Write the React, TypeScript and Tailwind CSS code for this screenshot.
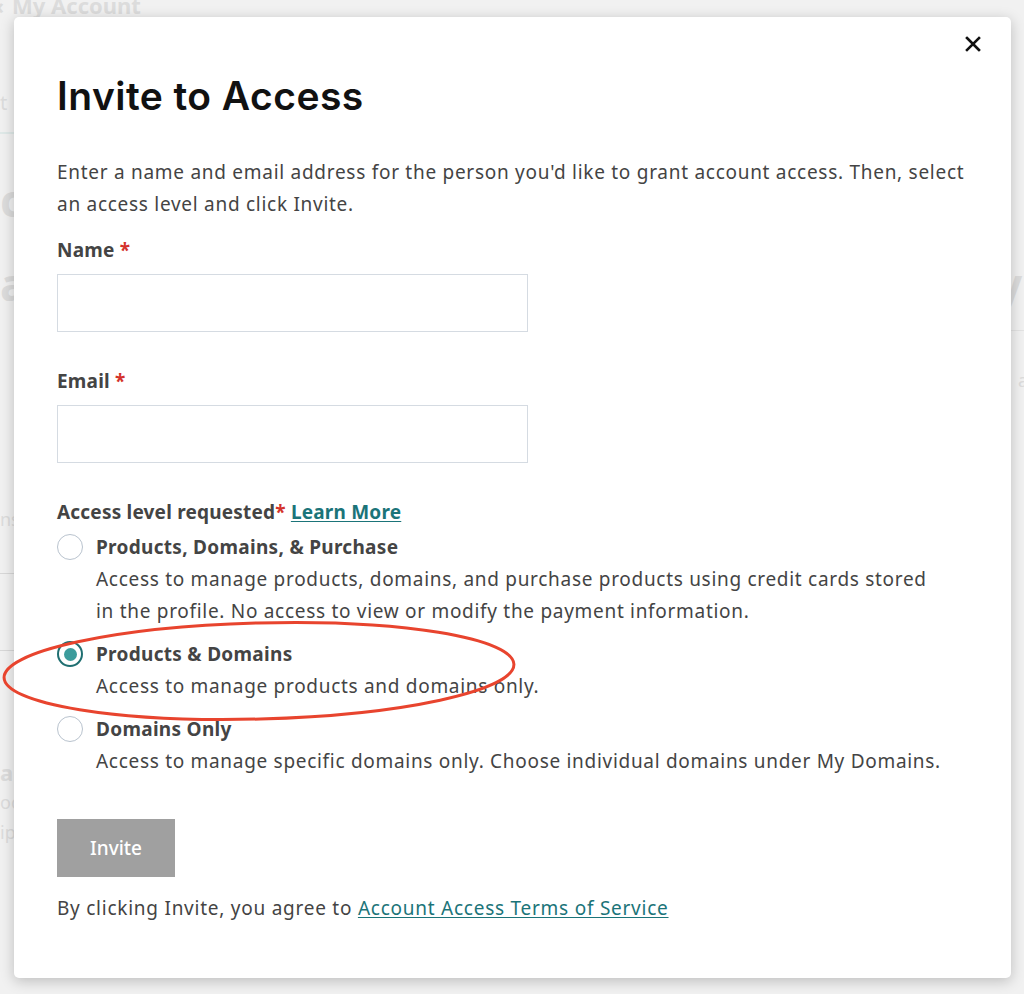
import React, { useState } from "react";

const font = { fontFamily: '"Noto Sans", "Open Sans", sans-serif' };

type Level = {
  id: string;
  title: string;
  desc: string;
};

const levels: Level[] = [
  {
    id: "purchase",
    title: "Products, Domains, & Purchase",
    desc: "Access to manage products, domains, and purchase products using credit cards stored in the profile. No access to view or modify the payment information.",
  },
  {
    id: "products",
    title: "Products & Domains",
    desc: "Access to manage products and domains only.",
  },
  {
    id: "domains",
    title: "Domains Only",
    desc: "Access to manage specific domains only. Choose individual domains under My Domains.",
  },
];

const Radio = ({ checked }: { checked: boolean }) => (
  <span
    className={
      checked
        ? "flex h-[26px] w-[26px] shrink-0 items-center justify-center rounded-full border-2 border-[#1f6f71] bg-white"
        : "flex h-[26px] w-[26px] shrink-0 items-center justify-center rounded-full border border-[#b9c3ce] bg-white"
    }
  >
    {checked && <span className="h-[13px] w-[13px] rounded-full bg-[#3c9c9c]" />}
  </span>
);

const Background = () => (
  <div className="flex h-full flex-col text-[#dcdcdc]" style={font}>
    <div className="flex h-[16px] items-end gap-2 pl-0 text-[22px] font-bold leading-none">
      <span className="-ml-[4px]">‹</span>
      <span>My Account</span>
    </div>
    <div className="mt-[72px] text-[20px]">t</div>
    <div className="mt-[14px] h-[2px] w-[60px] bg-[#dfe9e8]" />
    <div className="flex justify-between text-[44px] font-bold leading-none">
      <span className="mt-[44px]">c</span>
    </div>
    <div className="mt-[40px] flex justify-between text-[44px] font-bold leading-none">
      <span>a</span>
      <span className="mr-[2px]">y</span>
    </div>
    <div className="mt-[24px] ml-auto h-px w-[30px] bg-[#e3e3e3]" />
    <div className="mt-[36px] ml-auto mr-[-4px] text-[18px]">a</div>
    <div className="mt-[112px] text-[18px]">ns</div>
    <div className="mt-[40px] h-px w-[20px] bg-[#d8d8d8]" />
    <div className="mt-[76px] h-px w-[20px] bg-[#d8d8d8]" />
    <div className="mt-[110px] text-[22px] font-bold leading-none">ar</div>
    <div className="mt-[10px] text-[18px] leading-none">oc</div>
    <div className="mt-[12px] text-[18px] leading-none">ip</div>
  </div>
);

export default function App() {
  const [level, setLevel] = useState("products");
  const [name, setName] = useState("");
  const [email, setEmail] = useState("");

  return (
    <div className="relative h-[994px] w-[1024px] overflow-hidden bg-[#f1f1f1]">
      <Background />

      <div
        className="absolute left-[14px] top-[17px] h-[961px] w-[997px] rounded-[5px] bg-white px-[43px] pt-[55px] text-[#444] shadow-[0_3px_14px_rgba(0,0,0,0.22)]"
        style={font}
      >
        <button className="absolute right-[29px] top-[18px] flex h-[18px] w-[18px] items-center justify-center text-[#111]">
          <svg width="16" height="16" viewBox="0 0 16 16">
            <path d="M2 2L14 14M14 2L2 14" stroke="currentColor" strokeWidth="2.6" strokeLinecap="square" />
          </svg>
        </button>

        <h2
          className="text-[39px] font-semibold leading-[48px] tracking-[0.45px] text-[#111]"
          style={{ fontFamily: 'Inter, "Noto Sans", sans-serif' }}
        >
          Invite to Access
        </h2>

        <p className="mt-[36px] text-[19px] leading-[32px] tracking-[0.72px]">
          Enter a name and email address for the person you'd like to grant account access. Then, select an access level
          and click Invite.
        </p>

        <label className="mt-[16px] block text-[19px] font-bold leading-[28px] tracking-[0.2px]">
          Name <span className="text-[#d4322b]">*</span>
        </label>
        <input
          className="mt-[10px] block h-[58px] w-[471px] border border-[#d5dbe2] px-3 text-[18px] outline-none"
          value={name}
          onChange={(e) => setName(e.target.value)}
        />

        <label className="mt-[35px] block text-[19px] font-bold leading-[28px] tracking-[0.2px]">
          Email <span className="text-[#d4322b]">*</span>
        </label>
        <input
          className="mt-[10px] block h-[58px] w-[471px] border border-[#d5dbe2] px-3 text-[18px] outline-none"
          value={email}
          onChange={(e) => setEmail(e.target.value)}
        />

        <div className="mt-[35px] text-[19px] font-bold leading-[28px] tracking-[0.2px]">
          Access level requested<span className="text-[#d4322b]">*</span>{" "}
          <a className="text-[#1b7479] underline underline-offset-2">Learn More</a>
        </div>

        <div className="mt-[7px] flex flex-col gap-[13px]">
          {levels.map((l) => (
            <div key={l.id} className="flex cursor-pointer gap-[13px]" onClick={() => setLevel(l.id)}>
              <div className="flex h-[28px] items-center">
                <Radio checked={level === l.id} />
              </div>
              <div className="max-w-[848px]">
                <div className="text-[19px] font-bold leading-[28px] tracking-[0.3px]">{l.title}</div>
                <div className="mt-[2px] text-[19px] leading-[32px] tracking-[0.7px]">{l.desc}</div>
              </div>
            </div>
          ))}
        </div>

        <button className="mt-[42px] block h-[58px] w-[118px] bg-[#a0a0a0] text-[19px] font-medium text-white">
          Invite
        </button>

        <p className="mt-[15px] text-[19px] leading-[32px] tracking-[0.75px]">
          By clicking Invite, you agree to{" "}
          <a className="text-[#1b7479] underline underline-offset-2">Account Access Terms of Service</a>
        </p>
      </div>

      <svg
        className="pointer-events-none absolute left-0 top-[615px]"
        width="530"
        height="110"
        viewBox="0 0 530 110"
      >
        <ellipse
          cx="259"
          cy="56"
          rx="255"
          ry="48"
          transform="rotate(-1.5 259 56)"
          fill="none"
          stroke="#e8442e"
          strokeWidth="3"
        />
      </svg>
    </div>
  );
}
